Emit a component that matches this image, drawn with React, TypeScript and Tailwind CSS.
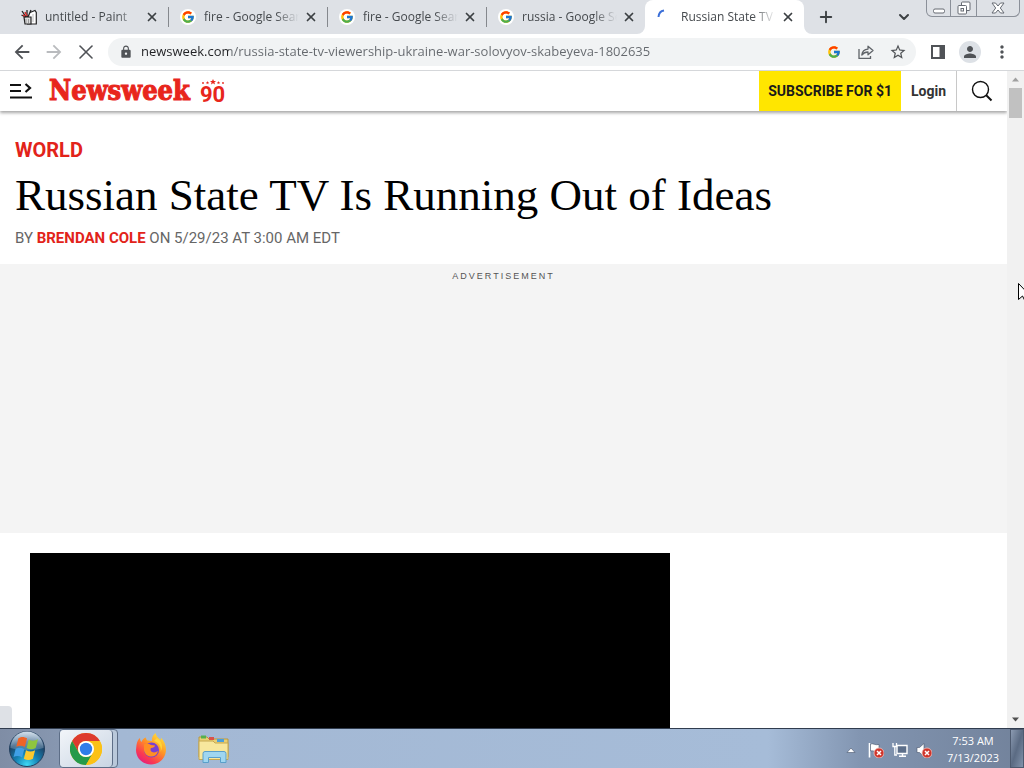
import { useState } from 'react'
import type { ReactNode } from 'react'
import { FcGoogle } from 'react-icons/fc'
import { MdArrowBack, MdArrowForward, MdLock, MdMoreVert, MdPerson, MdStarBorder } from 'react-icons/md'
import { ChevronDown, Plus, X } from 'lucide-react'

type TabItem = { id: number; title: string; icon: ReactNode }

const PaintIcon = () => (
  <svg viewBox="0 0 16 16" className="size-4">
    <path d="M9 3.500L14 1.500l1.300 2V15H6" fill="#fff" stroke="#222" strokeWidth="1.2" />
    <path d="M3 8h7v7H4z" fill="#ddd" stroke="#222" strokeWidth="1.2" />
    <path d="M1 2l4 6M6 1v7M10 1L7 8M0.5 6l4 2" stroke="#222" strokeWidth="1.3" />
    <path d="M4 3l2 4M2 6l2 1" stroke="#d42a2a" strokeWidth="1.6" />
    <path d="M5 10v4M7.5 10v4" stroke="#999" />
    <path d="M12 5v8" stroke="#bbb" />
  </svg>
)

const Spinner = () => (
  <svg viewBox="0 0 16 16" className="size-4" fill="none">
    <path d="M1.5 8C1.7 4.6 4 2 7 1.5" stroke="#3b6fd8" strokeWidth="2" />
  </svg>
)

const ShareIcon = () => (
  <svg viewBox="0 0 16 16" className="size-4" fill="none" stroke="#5f6368" strokeWidth="1.3">
    <path d="M1 5v9.3h11.5V12" />
    <path d="M3.8 11C4.2 7.500 6.500 5.300 10 5.100V2.200L15 6.500l-5 4.300V8C7.500 8 5.500 8.800 3.800 11z" strokeLinejoin="round" />
  </svg>
)

const SidePanelIcon = () => (
  <svg viewBox="0 0 14 14" className="size-3.5">
    <path d="M1 1h12v12H1z" fill="none" stroke="#505357" strokeWidth="2" />
    <path d="M8.500 1H13v12H8.500z" fill="#505357" />
  </svg>
)

const MenuIcon = () => (
  <svg viewBox="0 0 22 16" className="h-4 w-[22px]" fill="none" stroke="#111">
    <path d="M0 2h11M0 8h11M0 14.500h22" strokeWidth="1.800" />
    <path d="M15.500 1l4.500 4-4.500 4" strokeWidth="2.200" />
  </svg>
)

const SearchIcon = () => (
  <svg viewBox="0 0 22 22" className="size-[22px]" fill="none" stroke="#111">
    <circle cx="9.500" cy="9.500" r="8" strokeWidth="1.400" />
    <path d="M15 15l5.500 5.500" strokeWidth="2" />
  </svg>
)

const Stars = () => (
  <svg viewBox="0 0 24 6" className="h-1.5 w-6" fill="#e8261c">
    <path d="M12 0l.9 2h2.200l-1.700 1.300.6 2.200-2-1.300-2 1.300.6-2.200L8.900 2h2.200z" />
    <path d="M6.500 2l.5 1.200h1.200l-1 .8.400 1.200-1.100-.7-1.100.7.400-1.200-1-.8H6zM17.500 2l.5 1.200h1.200l-1 .8.400 1.200-1.100-.7-1.100.7.400-1.200-1-.8H17z" />
    <circle cx="2" cy="4" r=".9" />
    <circle cx="22" cy="4" r=".9" />
  </svg>
)

const StartOrb = () => (
  <svg viewBox="0 0 38 38" className="size-[38px]">
    <defs>
      <radialGradient id="orb" cx=".5" cy=".95" r=".95">
        <stop offset="0" stopColor="#3fd9f5" />
        <stop offset=".35" stopColor="#1583b5" />
        <stop offset=".7" stopColor="#1c4468" />
        <stop offset="1" stopColor="#6f8fae" />
      </radialGradient>
      <linearGradient id="gloss" x1="0" y1="0" x2="0" y2="1">
        <stop offset="0" stopColor="#e6eff7" stopOpacity=".85" />
        <stop offset="1" stopColor="#a9c2d8" stopOpacity=".25" />
      </linearGradient>
    </defs>
    <circle cx="19" cy="19" r="17.500" fill="url(#orb)" stroke="#23405f" />
    <path d="M2.500 18a16.500 16.500 0 0133 0c-10 3-23 3-33 0z" fill="url(#gloss)" />
    <g transform="translate(-2.800 -2.800) scale(1.150)">
      <path d="M11.500 9.500c3-1.600 5-1.300 7.500.2l-1.900 7.600c-2.500-1.500-4.700-1.600-7.500-.3z" fill="#ee6427" />
      <path d="M20.500 10.600c2.600 1.500 5 1.500 8-.1l-2 7.600c-2.800 1.500-5.200 1.500-7.900 0z" fill="#8fc63f" />
      <path d="M9.100 18.800c2.900-1.400 5-1.200 7.500.3l-1.900 7.300c-2.500-1.500-4.800-1.700-7.400-.5z" fill="#3f9fe6" />
      <path d="M18.100 20c2.600 1.500 5 1.500 7.900 0l-1.900 7.400c-2.900 1.500-5.200 1.500-7.900 0z" fill="#fdc92e" />
    </g>
  </svg>
)

const ChromeIcon = () => (
  <svg viewBox="0 0 32 32" className="size-8">
    <circle cx="16" cy="16" r="16" fill="#fbc116" />
    <path d="M2.140 8A16 16 0 0129.860 8H16a8 8 0 00-6.930 12z" fill="#dd3b2e" />
    <path d="M2.140 8A16 16 0 0016 32l6.930-12A8 8 0 019.070 20z" fill="#259a4a" />
    <path d="M16 8h13.860A16 16 0 0116 32l6.930-12A8 8 0 0016 8z" fill="#fbc116" />
    <circle cx="16" cy="16" r="8" fill="#fff" />
    <circle cx="16" cy="16" r="6.200" fill="#2f7de9" />
  </svg>
)

const FirefoxIcon = () => (
  <svg viewBox="0 0 32 32" className="size-8">
    <defs>
      <linearGradient id="fox" x1=".85" y1=".05" x2=".2" y2="1">
        <stop offset="0" stopColor="#ffe23c" />
        <stop offset=".4" stopColor="#ff9425" />
        <stop offset=".75" stopColor="#fb3a50" />
        <stop offset="1" stopColor="#e01a87" />
      </linearGradient>
    </defs>
    <path d="M1.500 12C2 8.500 3.500 6 5 5c0 2 .5 3 1.500 4 1-2.500 2.500-4 4.500-4.500 0 1.500.7 2.500 1.500 3L17 8c-.5-3 1-6 3.500-8 .5 3 3 5 5 7 .5-1 .5-1.500.3-2.500C29 7.500 31 12 31 16.500 31 25 24.500 31.500 16 31.500S1 25 1 17z" fill="url(#fox)" />
    <circle cx="16.500" cy="17" r="7.500" fill="#7a3fd1" />
    <path d="M9 11.500c2-1 5-1 7 .5l4 .5c0 1.500-2 2.500-4 2.500-1 1.500-.5 3 1 4 2.500 1 4 0 6-1-1 4-4 6-7.500 5.500C11 23 8.500 19 9 15z" fill="#ff8f24" />
    <path d="M19 8c5 1.500 8 6 6.500 11 3-5 1.500-11-3.500-14z" fill="#ffd43a" />
  </svg>
)

const ExplorerIcon = () => (
  <svg viewBox="0 0 34 30" className="h-[30px] w-[34px]">
    <path d="M2 3h8l2 2h19v18H2z" fill="#e9cf73" stroke="#b9983f" />
    <path d="M4 1.500h5v3H4z" fill="#55b04e" />
    <path d="M12 3h5v3h-5z" fill="#d9534a" />
    <path d="M20 5h7v3h-7z" fill="#4aa0dc" />
    <path d="M2 7h14l2 2h13v16.500H2z" fill="#f7e79d" stroke="#c6a850" />
    <path d="M6 28.500V19.500a2 2 0 012-2h19a2 2 0 012 2v9h-5.500v-5h-12v5z" fill="#9fd6f0" stroke="#5a9fca" />
  </svg>
)

const RedBadge = () => (
  <g>
    <circle cx="11" cy="11" r="5" fill="#d0352b" stroke="#f1c4bf" strokeWidth=".8" />
    <path d="M9 9l4 4M13 9l-4 4" stroke="#fff" strokeWidth="1.500" />
  </g>
)

const FlagIcon = () => (
  <svg viewBox="0 0 16 16" className="size-4">
    <path d="M1.500 1v14.500" stroke="#fff" strokeWidth="1.600" />
    <path d="M2.500 2c3-1 4 1.500 8.500.5v7c-4 1-5.500-1.500-8.500-.5z" fill="#fff" stroke="#46546b" strokeWidth=".6" />
    <RedBadge />
  </svg>
)

const NetworkIcon = () => (
  <svg viewBox="0 0 16 16" className="size-4" fill="none">
    <path d="M5 3.500h10v8H5z" fill="#5d6f8a" stroke="#fff" strokeWidth="1.400" />
    <path d="M7 14.300h7M10.500 12v2" stroke="#fff" strokeWidth="1.400" />
    <path d="M1 1v3.500h3.500V1M2.800 4.500V13H5" stroke="#fff" strokeWidth="1.300" />
  </svg>
)

const SpeakerIcon = () => (
  <svg viewBox="0 0 16 16" className="size-4">
    <path d="M1 5.500h2.500L8 1.500v13l-4.500-4H1z" fill="#fff" stroke="#46546b" strokeWidth=".6" />
    <RedBadge />
  </svg>
)

// small outward curve at the foot of the active tab
const TabFoot = ({ className }: { className: string }) => (
  <svg viewBox="0 0 8 8" className={`absolute bottom-0 size-2 ${className}`}>
    <path d="M8 0v8H0a8 8 0 008-8z" fill="#fff" />
  </svg>
)

const tabs: TabItem[] = [
  { id: 1, title: 'untitled - Paint', icon: <PaintIcon /> },
  { id: 2, title: 'fire - Google Search', icon: <FcGoogle className="size-4 rounded-full bg-white p-px" /> },
  { id: 3, title: 'fire - Google Search', icon: <FcGoogle className="size-4 rounded-full bg-white p-px" /> },
  { id: 4, title: 'russia - Google Search', icon: <FcGoogle className="size-4 rounded-full bg-white p-px" /> },
  { id: 5, title: 'Russian State TV Is Running Out', icon: <Spinner /> },
]

const Tab = ({ tab, active, divider, onSelect }: { tab: TabItem; active: boolean; divider: boolean; onSelect: () => void }) => (
  <div
    onClick={onSelect}
    className={`relative flex h-full min-w-0 max-w-[159px] flex-1 items-center pr-2 pl-3 ${active ? 'rounded-t-lg bg-white' : ''}`}
  >
    {divider && <span className="absolute left-0 h-5 w-px bg-[#85888d]" />}
    {active && (
      <>
        <TabFoot className="-left-2" />
        <TabFoot className="-right-2 -scale-x-100" />
      </>
    )}
    <span className="shrink-0">{tab.icon}</span>
    <span className="ml-2 min-w-0 flex-1 overflow-hidden text-xs whitespace-nowrap text-[#45494d] [mask-image:linear-gradient(90deg,#000_75%,transparent)]">
      {tab.title}
    </span>
    <button aria-label="Close tab" className="ml-1 flex size-4 shrink-0 items-center justify-center text-[#3c4043]">
      <X className="size-3.5" strokeWidth={3} />
    </button>
  </div>
)

const TabStrip = () => {
  const [selected, setSelected] = useState(5)

  return (
    <div className="flex h-[34px] shrink-0 bg-[#dee1e6] pr-1 pl-[9px]">
      <div className="flex min-w-0 flex-1">
        {tabs.map((tab, i) => (
          <Tab
            key={tab.id}
            tab={tab}
            active={selected === tab.id}
            divider={i > 0 && selected !== tab.id}
            onSelect={() => setSelected(tab.id)}
          />
        ))}
        <button aria-label="New tab" className="ml-2 flex w-7 shrink-0 items-center justify-center text-[#3c4043]">
          <Plus className="size-[18px]" strokeWidth={2.5} />
        </button>
      </div>
      <button aria-label="Search tabs" className="flex w-7 shrink-0 items-center justify-center text-[#3c4043]">
        <ChevronDown className="size-4" strokeWidth={3} />
      </button>
      <div className="ml-2 flex h-[17px] shrink-0 divide-x divide-[#8b9099] rounded-b-md border border-t-0 border-[#8b9099]">
        <button aria-label="Minimize" className="flex w-6 items-center justify-center">
          <svg viewBox="0 0 14 14" className="size-3.5" fill="#fff" stroke="#666b73">
            <rect x="1.500" y="8" width="11" height="4" rx="1.500" />
          </svg>
        </button>
        <button aria-label="Restore" className="flex w-[26px] items-center justify-center">
          <svg viewBox="0 0 14 14" className="size-3.5" fill="#fff" stroke="#666b73">
            <rect x="4.500" y="1" width="8.500" height="8.500" rx="1" />
            <rect x="1" y="4.500" width="8.500" height="8.500" rx="1" />
            <rect x="4" y="7.500" width="2.500" height="2.500" />
          </svg>
        </button>
        <button aria-label="Close" className="flex w-[42px] items-center justify-center">
          <svg viewBox="0 0 14 14" className="size-3.5" fill="#fff" stroke="#666b73">
            <path d="M1 2h3.500L7 5l2.500-3H13L9.300 7l3.700 5H9.500L7 9l-2.500 3H1l3.700-5z" strokeLinejoin="round" />
          </svg>
        </button>
      </div>
    </div>
  )
}

const ToolButton = ({ label, children }: { label: string; children: ReactNode }) => (
  <button aria-label={label} className="flex size-7 shrink-0 items-center justify-center text-[#505357]">
    {children}
  </button>
)

const Toolbar = () => (
  <div className="flex h-[37px] shrink-0 items-center gap-1 border-b border-[#d5d7da] bg-white px-2">
    <ToolButton label="Back"><MdArrowBack className="size-[22px]" /></ToolButton>
    <ToolButton label="Forward"><MdArrowForward className="size-[22px] text-[#b9bbbe]" /></ToolButton>
    <ToolButton label="Stop"><X className="size-6" strokeWidth={1.6} /></ToolButton>
    <div className="mx-1 flex h-7 min-w-0 flex-1 items-center gap-1 rounded-full bg-[#f1f3f4] pr-1 pl-[11px]">
      <MdLock className="size-3.5 shrink-0 text-[#505357]" />
      <input
        aria-label="Address"
        defaultValue="newsweek.com/russia-state-tv-viewership-ukraine-war-solovyov-skabeyeva-1802635"
        className="ml-1 min-w-0 flex-1 bg-[linear-gradient(90deg,#202124_88px,#64686d_88px)] bg-clip-text text-[13px] text-transparent outline-none"
      />
      <ToolButton label="Google Lens"><FcGoogle className="size-3.5" /></ToolButton>
      <ToolButton label="Share"><ShareIcon /></ToolButton>
      <ToolButton label="Bookmark"><MdStarBorder className="size-[18px]" /></ToolButton>
    </div>
    <ToolButton label="Side panel"><SidePanelIcon /></ToolButton>
    <ToolButton label="Profile">
      <span className="flex size-[22px] items-center justify-center rounded-full bg-[#dde1e6]"><MdPerson className="size-[18px]" /></span>
    </ToolButton>
    <ToolButton label="Menu"><MdMoreVert className="size-5" /></ToolButton>
  </div>
)

const SiteHeader = () => (
  <header className="relative flex h-10 shrink-0 items-stretch bg-white font-['Roboto',sans-serif] shadow-[0_2px_3px_rgba(0,0,0,0.35)]">
    <button aria-label="Open menu" className="px-2.5"><MenuIcon /></button>
    <a href="#" className="ml-[7px] flex items-center gap-2.5 text-[#e8261c]">
      <span className="font-['DejaVu_Serif_Condensed','DejaVu_Serif',serif] text-[27px] leading-10 font-bold [-webkit-text-stroke:1px_#e8261c]">Newsweek</span>
      <span className="flex flex-col items-center pt-0.5">
        <Stars />
        <span className="text-[22px] leading-5 font-bold">90</span>
      </span>
    </a>
    <a href="#" className="ml-auto flex items-center bg-[#ffe600] px-[9px] text-sm font-bold text-[#1a1a1a]">SUBSCRIBE FOR $1</a>
    <a href="#" className="flex items-center border-r border-[#c8c8c8] px-2.5 text-sm font-bold text-[#333]">Login</a>
    <button aria-label="Search" className="flex w-[50px] items-center justify-center"><SearchIcon /></button>
  </header>
)

const Article = () => (
  <article className="font-['Roboto',sans-serif]">
    <div className="px-[15px] pt-[27px] pb-4">
      <a href="#" className="block text-xl leading-6 font-bold text-[#e2231a]">WORLD</a>
      <h1 className="mt-1 font-['Liberation_Serif',serif] text-[45px] leading-[58px] whitespace-nowrap text-black">
        Russian State TV Is Running Out of Ideas
      </h1>
      <p className="mt-1 text-[15px] leading-5 text-[#666]">
        BY <a href="#" className="font-bold text-[#e2231a]">BRENDAN COLE</a> ON 5/29/23 AT 3:00 AM EDT
      </p>
    </div>
    <div className="h-[269px] bg-[#f4f4f4] pt-1.5 text-center font-['Liberation_Sans',sans-serif] text-[9px] leading-3 tracking-[2px] text-[#555]">
      ADVERTISEMENT
    </div>
    <div className="mx-[30px] mt-5 aspect-video max-w-[640px] bg-black" />
  </article>
)

const Scrollbar = () => (
  <div className="flex w-[17px] shrink-0 flex-col items-center bg-[#f1f1f1]">
    <svg viewBox="0 0 17 17" className="size-[17px]"><path d="M5 10.500h7L8.500 6.500z" fill="#a0a0a0" /></svg>
    <div className="h-[30px] w-[13px] bg-[#c1c1c1]" />
    <svg viewBox="0 0 17 17" className="mt-auto size-[17px]"><path d="M5 6.500h7l-3.500 4z" fill="#505050" /></svg>
  </div>
)

const Taskbar = () => (
  <footer className="flex h-10 shrink-0 items-stretch border-t border-[#303c4e] bg-[linear-gradient(90deg,#7f8da5_0px,#8797b0_58px,#a3b8d4_120px,#a6bcd8_75%,#8295b1_84%,#72829b_100%)]">
    <button aria-label="Start" className="flex w-[59px] items-center pl-2"><StartOrb /></button>
    <div className="flex rounded-sm border border-[#5d6e87] bg-[#b9c8da]">
      <button aria-label="Google Chrome" className="flex w-[53px] items-center justify-center rounded-sm border-r border-[#5d6e87] bg-linear-to-br from-[#f2f5f9] to-[#c9d5e3]">
        <ChromeIcon />
      </button>
      <span className="w-1" />
    </div>
    <button aria-label="Firefox" className="ml-1 flex w-[58px] items-center justify-center"><FirefoxIcon /></button>
    <button aria-label="File Explorer" className="ml-1 flex w-[60px] items-center justify-center"><ExplorerIcon /></button>
    <div className="ml-auto flex items-center gap-2 pt-0.5">
      <button aria-label="Show hidden icons" className="mr-1">
        <svg viewBox="0 0 10 6" className="h-1.5 w-2.5"><path d="M1 5.500h8L5 1z" fill="#fff" stroke="#46546b" strokeWidth=".6" /></svg>
      </button>
      <FlagIcon />
      <NetworkIcon />
      <SpeakerIcon />
    </div>
    <div className="ml-2 flex w-[66px] flex-col justify-center text-center text-[11px] leading-[17px] text-white">
      <span>7:53 AM</span>
      <span>7/13/2023</span>
    </div>
    <button aria-label="Show desktop" className="ml-1 w-3.5 border border-[#4d5a6f] bg-linear-to-br from-[#8c9bb2] via-[#5b6b83] to-[#8293ab]" />
  </footer>
)

const App = () => (
  <div className="relative flex h-screen flex-col overflow-hidden bg-white font-['Open_Sans',sans-serif]">
    <TabStrip />
    <Toolbar />
    <div className="flex min-h-0 flex-1">
      <main className="relative flex min-w-0 flex-1 flex-col overflow-hidden">
        <SiteHeader />
        <Article />
        <div className="absolute bottom-0 left-0 h-[22px] w-3 rounded-tr bg-[#dee1e6]" />
      </main>
      <Scrollbar />
    </div>
    <Taskbar />
    <svg viewBox="0 0 12 19" className="pointer-events-none absolute top-[283px] left-[1018px] h-[19px] w-3">
      <path d="M.5 .5v16l4-3.500 2.500 5 2-1-2.500-5h5z" fill="#fff" stroke="#000" />
    </svg>
  </div>
)

export default App
